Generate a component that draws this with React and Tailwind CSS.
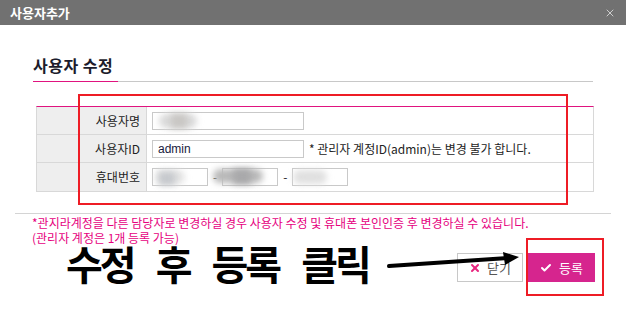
import { Check, X } from 'lucide-react';

const font = { fontFamily: '"Noto Sans CJK KR", "Noto Sans", sans-serif' };

// blurred placeholder for masked values
function Masked({ className }) {
  return <div className={`absolute rounded-full blur-[3px] ${className}`} />;
}

function Field({ w, children }) {
  return (
    <div className={`relative h-[18px] border border-[#c9c9c9] bg-white ${w}`}>
      {children}
    </div>
  );
}

function Row({ label, children, last }) {
  return (
    <div className={`flex h-[28px] ${last ? '' : 'border-b border-[#d8d8d8]'}`}>
      <div className="w-[110px] shrink-0 bg-[#eeeeee] border-r border-[#d8d8d8] flex items-center justify-end pr-[6px] text-[12px] text-[#222]">
        {label}
      </div>
      <div className="flex-1 flex items-center pl-[5px] gap-[5px]">{children}</div>
    </div>
  );
}

export default function App() {
  return (
    <div className="relative w-[626px] h-[320px] bg-white overflow-hidden" style={font}>
      {/* title bar */}
      <div className="h-[25px] bg-[#717171] flex items-center justify-between pl-[10px] pr-[10px]">
        <span className="text-white text-[13px] font-bold">사용자추가</span>
        <X size={12} strokeWidth={1.3} className="text-white" />
      </div>

      <div className="mx-[33px] pt-[30px]">
        <div className="text-[16px] font-semibold text-[#1c1c2c] leading-[21px] tracking-[0.5px]">사용자 수정</div>
        <div className="flex mt-[5px]">
          <div className="w-[85px] h-px bg-[#e0137f]" />
          <div className="flex-1 h-px bg-[#c8c8c8]" />
        </div>

        {/* form table */}
        <div className="ml-[3px] w-[558px] mt-[24px] border-t border-[#e0137f] border-x border-b border-x-[#d8d8d8] border-b-[#d8d8d8]">
          <Row label="사용자명">
            <Field w="w-[152px]">
              <Masked className="left-[6px] top-[1px] w-[38px] h-[14px] bg-[#d9d9d9]" />
              <Masked className="left-[18px] top-[1px] w-[16px] h-[14px] bg-[#c9c7c4] rounded-none" />
            </Field>
          </Row>
          <Row label="사용자ID">
            <Field w="w-[152px]">
              <span className="absolute left-[5px] top-[-1px] text-[12px] text-[#1a1a40]" style={{ fontFamily: '"Liberation Sans", Arial, sans-serif' }}>
                admin
              </span>
            </Field>
            <span className="text-[12px] text-[#222]">* 관리자 계정ID(admin)는 변경 불가 합니다.</span>
          </Row>
          <Row label="휴대번호" last>
            <Field w="w-[56px]">
              <Masked className="left-[2px] top-[1px] w-[30px] h-[14px] bg-[#e2e2e2]" />
              <Masked className="left-[6px] top-[3px] w-[16px] h-[13px] bg-[#c6c9cd] rounded-none" />
            </Field>
            <span className="text-[12px] text-[#222]">-</span>
            <Field w="w-[56px]">
              <Masked className="left-[-10px] top-[0px] w-[50px] h-[14px] bg-[#b9b9b9]" />
              <Masked className="left-[10px] top-[0px] w-[18px] h-[15px] bg-[#a9a9ab] rounded-none" />
            </Field>
            <span className="text-[12px] text-[#222]">-</span>
            <Field w="w-[56px]">
              <Masked className="left-[0px] top-[1px] w-[34px] h-[14px] bg-[#e0e0e0]" />
            </Field>
          </Row>
        </div>
      </div>

      <div className="mx-[15px] mt-[21px] border-t border-[#d4d4d4] pl-[17px] text-[12px] leading-[15px] text-[#e6007e]">
        <div className="pt-[1px]">*관지라계정을 다른 담당자로 변경하실 경우 사용자 수정 및 휴대폰 본인인증 후 변경하실 수 있습니다.</div>
        <div>(관리자 계정은 1개 등록 가능)</div>
      </div>

      <div className="flex items-start pl-[66px] pr-[31px]">
        <div className="text-[40px] font-bold text-black leading-[36px] tracking-[-3px] [word-spacing:16px]">
          수정 후 등록 클릭
        </div>
        <div className="ml-auto flex gap-[5px] mt-[8px]">
          <button className="w-[66px] h-[29px] border border-[#c8c8c8] bg-white flex items-center justify-center gap-[6px] text-[13px] text-[#555]">
            <X size={12} strokeWidth={4} className="text-[#e8267f]" />
            닫기
          </button>
          <button className="w-[67px] h-[29px] bg-[#d6258e] flex items-center justify-center gap-[7px] text-[13px] text-white">
            <Check size={12} strokeWidth={4} />
            등록
          </button>
        </div>
      </div>

      {/* annotations */}
      <div className="absolute left-[78px] top-[94px] w-[490px] h-[111px] border-2 border-[#ee1c25]" />
      <div className="absolute left-[526px] top-[238px] w-[78px] h-[58px] border-2 border-[#ee1c25]" />
      <svg className="absolute left-0 top-0" width="626" height="320">
        <path d="M389 266 L508 258" stroke="#000" strokeWidth="4" strokeLinecap="round" />
        <polygon points="503,252 519,257 505,265" fill="#000" />
      </svg>
    </div>
  );
}
